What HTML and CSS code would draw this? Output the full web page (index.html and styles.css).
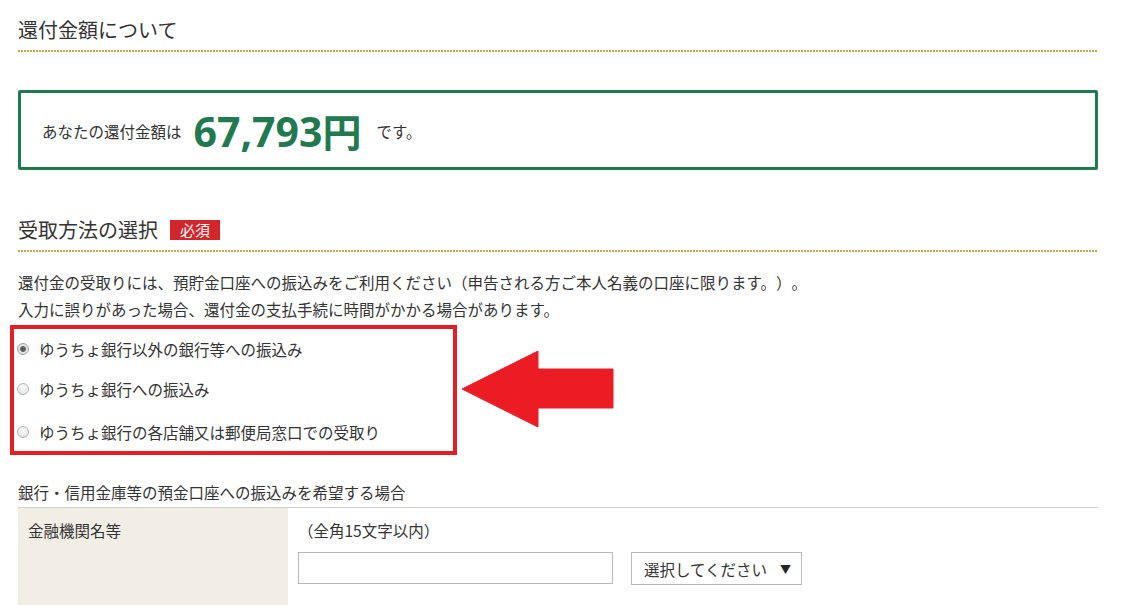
FILE: index.html
```html
<!DOCTYPE html>
<html lang="ja">
<head>
<meta charset="utf-8">
<title>還付金額について</title>
<link rel="stylesheet" href="styles.css">
</head>
<body>
<div class="page">
  <h2 class="sec-title first">還付金額について</h2>

  <div class="refund-box">
    <span class="refund-label">あなたの還付金額は</span>
    <span class="refund-amount">67,793<span class="yen">円</span></span>
    <span class="refund-suffix">です。</span>
  </div>

  <h2 class="sec-title second">受取方法の選択<span class="badge">必須</span></h2>

  <p class="note">還付金の受取りには、預貯金口座への振込みをご利用ください（申告される方ご本人名義の口座に限ります。）。<br>入力に誤りがあった場合、還付金の支払手続に時間がかかる場合があります。</p>

  <div class="choice-area">
    <div class="highlight">
      <label class="radio-row"><input type="radio" name="method" checked><span>ゆうちょ銀行以外の銀行等への振込み</span></label>
      <label class="radio-row"><input type="radio" name="method"><span>ゆうちょ銀行への振込み</span></label>
      <label class="radio-row"><input type="radio" name="method"><span>ゆうちょ銀行の各店舗又は郵便局窓口での受取り</span></label>
    </div>
    <svg class="arrow" width="152" height="77" viewBox="0 0 152 77">
      <polygon points="0,38 76,0 76,18 151,18 151,57 76,57 76,76" fill="#ec1c24" stroke="#ec1c24" stroke-width="1" stroke-linejoin="round"/>
    </svg>
  </div>

  <h3 class="sub-title">銀行・信用金庫等の預金口座への振込みを希望する場合</h3>
  <div class="form-table">
    <div class="form-row">
      <div class="form-label">金融機関名等</div>
      <div class="form-field">
        <div class="hint">（全角15文字以内）</div>
        <div class="field-line">
          <input class="text-input" type="text">
          <div class="select-box"><span>選択してください</span><span class="caret">▼</span></div>
        </div>
      </div>
    </div>
  </div>
</div>
</body>
</html>
```

FILE: styles.css
```css
* { box-sizing: border-box; }
html, body {
  margin: 0;
  padding: 0;
  background: #fff;
}
body {
  font-family: "Noto Sans CJK JP", "Noto Sans", sans-serif;
  font-size: 15.5px;
  color: #333;
  overflow: hidden;
  text-spacing-trim: space-all;
}
.page {
  width: 1080px;
  margin-left: 18px;
}
.sec-title {
  margin: 0;
  font-size: 20px;
  font-weight: normal;
  line-height: 28px;
  padding-bottom: 7px;
  background-image: linear-gradient(to right, #c9a84a 2px, transparent 2px);
  background-size: 3px 2px;
  background-repeat: repeat-x;
  background-position: left bottom;
  display: flex;
  align-items: center;
}
.sec-title.first {
  padding-top: 14px;
  height: 52px;
}
.sec-title.second {
  margin-top: 45px;
  height: 37px;
}
.badge {
  display: inline-block;
  margin-left: 12px;
  background: #d3262c;
  color: #fff;
  font-size: 15px;
  line-height: 20px;
  height: 20px;
  padding: 0 10px;
}
.refund-box {
  margin-top: 38px;
  height: 80px;
  border: 3px solid #1f7a4f;
  border-radius: 2px;
  display: flex;
  align-items: center;
  padding-left: 21px;
  padding-top: 2px;
}
.refund-label {
  font-size: 15.5px;
}
.refund-amount {
  font-family: "Open Sans", "Noto Sans CJK JP", sans-serif;
  font-weight: 700;
  font-size: 41px;
  line-height: 1;
  color: #1f7a4f;
  margin-left: 12px;
  margin-right: 15px;
}
.refund-amount .yen {
  font-family: "Noto Sans CJK JP", sans-serif;
  font-size: 39px;
}
.note {
  margin: 17px 0 0 0;
  line-height: 27px;
}
.choice-area {
  position: relative;
  margin-top: 2px;
}
.highlight {
  margin-left: -8px;
  width: 447px;
  border: 4px solid #e31e24;
  padding: 0 0 0 3px;
}
.radio-row {
  display: flex;
  align-items: center;
  height: 40px;
}
.radio-row:last-child {
  height: 42px;
  padding-top: 4px;
}
.radio-row input {
  -webkit-appearance: none;
  appearance: none;
  width: 12px;
  height: 12px;
  margin: 0 10px 0 0;
  border-radius: 50%;
  border: 1px solid #b5b5b5;
  background: radial-gradient(circle at 50% 35%, #fdfdfd 0%, #e3e3e3 80%);
  flex: none;
}
.radio-row input:checked {
  background: radial-gradient(circle, #555 0, #666 2.5px, #e6e6e6 3.5px, #dcdcdc 100%);
  border-color: #a0a0a0;
}
.arrow {
  position: absolute;
  left: 444px;
  top: 26px;
}
.sub-title {
  margin: 26px 0 0 0;
  font-size: 15.5px;
  font-weight: normal;
  line-height: 22px;
}
.form-table {
  margin-top: 4px;
  border-top: 1px solid #cfcfcf;
}
.form-row {
  display: flex;
  height: 100px;
}
.form-label {
  width: 270px;
  background: #f1eee5;
  padding: 11px 0 0 10px;
  line-height: 22px;
}
.form-field {
  padding: 11px 0 0 10px;
}
.hint {
  line-height: 22px;
}
.field-line {
  display: flex;
  align-items: flex-start;
  margin-top: 11px;
  gap: 18px;
}
.text-input {
  width: 315px;
  height: 32px;
  border: 1px solid #b8b8b8;
  margin: 0;
  padding: 0 6px;
  font: inherit;
}
.select-box {
  width: 171px;
  height: 33px;
  border: 1px solid #b8b8b8;
  display: flex;
  align-items: center;
  justify-content: space-between;
  padding: 0 10px 0 12px;
}
.caret {
  font-size: 11px;
  color: #222;
}
```
